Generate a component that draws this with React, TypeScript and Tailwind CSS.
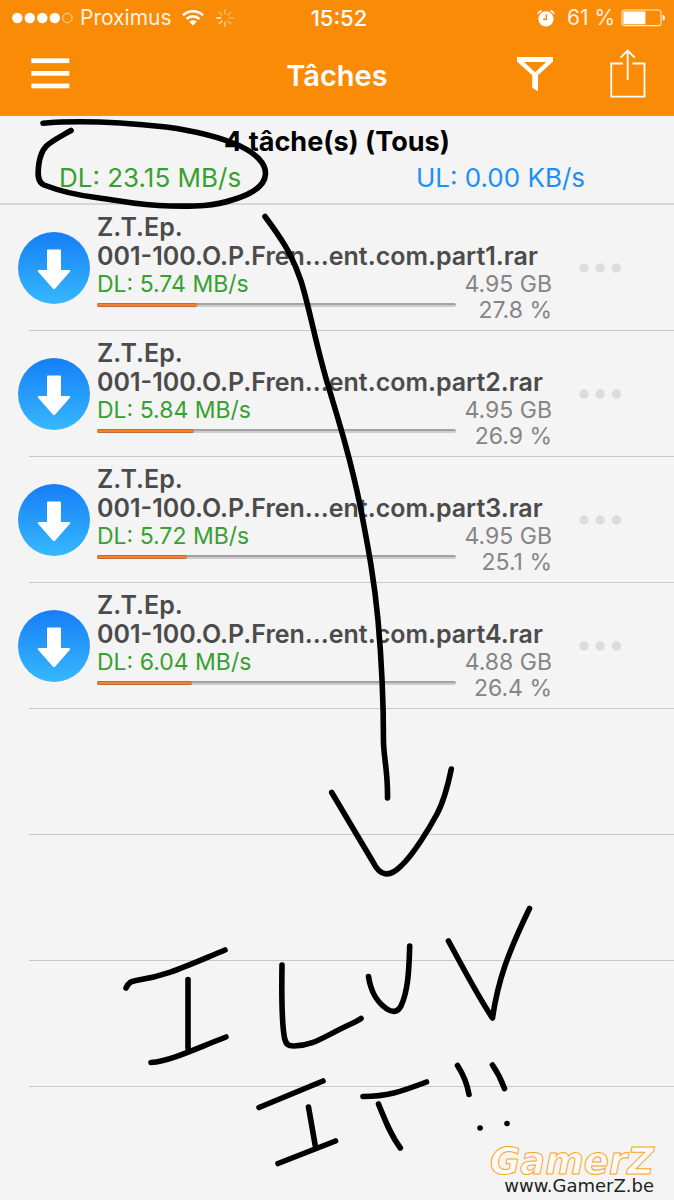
type Task = {
  id: number;
  name: string;
  speed: string;
  size: string;
  percent: number;
};

const tasks: Task[] = [
  { id: 1, name: "001-100.O.P.Fren...ent.com.part1.rar", speed: "5.74", size: "4.95 GB", percent: 27.8 },
  { id: 2, name: "001-100.O.P.Fren...ent.com.part2.rar", speed: "5.84", size: "4.95 GB", percent: 26.9 },
  { id: 3, name: "001-100.O.P.Fren...ent.com.part3.rar", speed: "5.72", size: "4.95 GB", percent: 25.1 },
  { id: 4, name: "001-100.O.P.Fren...ent.com.part4.rar", speed: "6.04", size: "4.88 GB", percent: 26.4 },
];

function SignalDots() {
  return (
    <svg width="62" height="12" viewBox="0 0 62 12" aria-hidden="true">
      <g fill="#fff">
        <circle cx="5.3" cy="6" r="5.2" />
        <circle cx="17.8" cy="6" r="5.2" />
        <circle cx="30.3" cy="6" r="5.2" />
        <circle cx="42.8" cy="6" r="5.2" />
      </g>
      <circle cx="55.4" cy="6" r="4.7" fill="none" stroke="#ffe2b8" strokeWidth="1" />
    </svg>
  );
}

function WifiIcon() {
  return (
    <svg width="22" height="16" viewBox="0 0 22 16" fill="none" stroke="#fff" strokeWidth="2.6" aria-hidden="true">
      <path d="M1 5.2C6.6-.2 15.4-.2 21 5.2" />
      <path d="M4.6 9C8.3 5.5 13.7 5.5 17.4 9" />
      <path d="M7.3 11.8C9.4 9.8 12.6 9.8 14.7 11.8L11 15.6Z" fill="#fff" stroke="none" />
    </svg>
  );
}

function Spinner() {
  const opacities = [0.45, 0.35, 0.35, 0.4, 0.55, 0.7, 0.95, 0.4];
  return (
    <svg width="18" height="18" viewBox="-9 -9 18 18" aria-hidden="true">
      {opacities.map((opacity, i) => (
        <line
          key={i}
          x1="0"
          y1="-4.2"
          x2="0"
          y2="-8.2"
          stroke="#fff"
          strokeWidth="1.5"
          strokeLinecap="round"
          opacity={opacity}
          transform={`rotate(${i * 45})`}
        />
      ))}
    </svg>
  );
}

function AlarmIcon() {
  return (
    <svg width="18" height="17" viewBox="0 0 18 17" fill="none" aria-hidden="true">
      <circle cx="9" cy="8.8" r="7.6" fill="#fff" />
      <path d="M9.3 4.3V9.3H6" stroke="#f98b07" strokeWidth="1.4" />
      <path d="M1 4.2C1.4 2.4 2.8 1.1 4.6.8M17 4.2C16.6 2.4 15.2 1.1 13.4.8" stroke="#fff" strokeWidth="1.4" />
    </svg>
  );
}

function BatteryIcon() {
  return (
    <svg width="45" height="18" viewBox="0 0 45 18" aria-hidden="true">
      <rect x="1" y="1" width="39" height="15.6" rx="2.4" fill="none" stroke="#ffe9c9" strokeWidth="1.1" />
      <rect x="2.4" y="2.4" width="22" height="12.8" rx="0.8" fill="#fff" />
      <path d="M41.6 6C43.5 6.2 43.9 7.6 43.9 8.8C43.9 10 43.5 11.4 41.6 11.6Z" fill="#fff" />
    </svg>
  );
}

function StatusBar() {
  return (
    <div className="grid grid-cols-[1fr_auto_1fr] items-center h-9 pl-3 pr-2 text-[21px] leading-6 text-white">
      <div className="flex items-center">
        <SignalDots />
        <span className="ml-1.5 text-[#fff3e0]">Proximus</span>
        <span className="ml-2.5"><WifiIcon /></span>
        <span className="ml-3"><Spinner /></span>
      </div>
      <time className="text-[22px] font-medium">15:52</time>
      <div className="flex items-center justify-end">
        <AlarmIcon />
        <span className="ml-3 text-[#fff3e0]">61 %</span>
        <span className="ml-1.5"><BatteryIcon /></span>
      </div>
    </div>
  );
}

function NavBar() {
  return (
    <nav className="grid grid-cols-[1fr_auto_1fr] items-center h-[79px] px-7 text-white">
      <button type="button" aria-label="Menu" className="justify-self-start pb-1">
        <svg width="44" height="32" viewBox="0 0 44 32" fill="#fff" aria-hidden="true">
          <rect x="3.3" y="0.4" width="38" height="4.7" />
          <rect x="3.3" y="13" width="38" height="4.7" />
          <rect x="3.3" y="25.6" width="38" height="4.7" />
        </svg>
      </button>
      <h1 className="text-[29px] leading-8 font-semibold">Tâches</h1>
      <div className="flex items-center justify-end gap-14 pb-1">
        <button type="button" aria-label="Filtrer">
          <svg width="38" height="36" viewBox="0 0 38 36" aria-hidden="true">
            <path
              fill="#fff"
              fillRule="evenodd"
              d="M1 1H37V5.4L22 19.2V35.2L16.2 31.8V19.2L1 5.4ZM8 6L19.1 16.2L30.2 6Z"
            />
          </svg>
        </button>
        <button type="button" aria-label="Partager">
          <svg width="36" height="50" viewBox="0 0 36 50" fill="none" stroke="#fff" strokeWidth="1.8" aria-hidden="true">
            <path d="M13 14.5H1.3V47.7H34.5V14.5H22.4" />
            <path d="M17.7 31V1.5M10.6 8.7L17.7 1.5L24.8 8.7" />
          </svg>
        </button>
      </div>
    </nav>
  );
}

function Summary() {
  return (
    <section className="h-[89px] pt-2.5 border-b-2 border-[#d6d6d6]">
      <h2 className="text-center text-[27px] leading-8 font-bold text-black">4 tâche(s) (Tous)</h2>
      <div className="grid grid-cols-2 pt-1 pr-9 text-[26px] leading-8">
        <p className="pl-[59px] text-[#38a031]">DL: 23.15 MB/s</p>
        <p className="text-right pr-[53px] text-[#1c90f8]">UL: 0.00 KB/s</p>
      </div>
    </section>
  );
}

function DownloadIcon() {
  return (
    <svg width="72" height="72" viewBox="0 0 72 72" className="shrink-0" aria-hidden="true">
      <defs>
        <linearGradient id="sky" x1="0" y1="0" x2="0" y2="1">
          <stop offset="0" stopColor="#167ef7" />
          <stop offset="1" stopColor="#36b8fe" />
        </linearGradient>
      </defs>
      <circle cx="36" cy="36" r="36" fill="url(#sky)" />
      <path
        d="M30 17.5H42Q43 17.5 43 18.5V38H51Q53 38.3 51.7 40L37.2 56.6Q36 57.8 34.8 56.6L20.3 40Q19 38.3 21 38H29V18.5Q29 17.5 30 17.5Z"
        fill="#fff"
      />
    </svg>
  );
}

function TaskRow({ task }: { task: Task }) {
  return (
    <li className="relative flex items-center h-[126px] pl-[18px] pr-[50px]">
      <DownloadIcon />
      <div className="flex-1 min-w-0 self-start pt-2 ml-[7px]">
        <h3 className="text-[25px] leading-[29px] font-semibold text-[#4b4b4b]">
          Z.T.Ep.
          <br />
          {task.name}
        </h3>
        <div className="flex text-[23px] leading-[26px]">
          <div className="flex-1">
            <p className="text-[#38a031]">DL: {task.speed} MB/s</p>
            <div
              role="progressbar"
              aria-label={task.name}
              aria-valuenow={task.percent}
              className="mt-1.5 h-1 rounded-full border-t-2 border-[#a2a2a2] bg-[#cccccc]"
            >
              <div
                className="-mt-0.5 h-1 rounded-full border-y border-[#c4693a] bg-[#f4812d]"
                style={{ width: `${task.percent}%` }}
              />
            </div>
          </div>
          <div className="w-24 text-right text-[#858585]">
            <p>{task.size}</p>
            <p>{task.percent} %</p>
          </div>
        </div>
      </div>
      <button type="button" aria-label="Options" className="ml-6">
        <svg width="48" height="12" viewBox="0 0 48 12" fill="#dcdcdc" aria-hidden="true">
          <circle cx="8" cy="6" r="4.7" />
          <circle cx="24.2" cy="6" r="4.7" />
          <circle cx="40.4" cy="6" r="4.7" />
        </svg>
      </button>
      <div className="absolute bottom-0 left-[29px] right-0 h-px bg-[#c9c9cb]" />
    </li>
  );
}

function Scribbles() {
  return (
    <svg
      viewBox="0 0 674 1200"
      className="pointer-events-none absolute top-0 left-0 w-full"
      fill="none"
      stroke="#000"
      strokeWidth="5.6"
      strokeLinecap="round"
      strokeLinejoin="round"
      aria-hidden="true"
    >
      <path d="M43 123.300C75 120.500 124 122.500 166 127C196 131 222 138 240 146C255 153 266 163 265.500 174C265 187 249 195 232 200C215 206 196 206.500 170 206C137 205.500 124 201 96 197.500C76 195 57 190 44 185C37 182 37.500 173 39 163C42 145 49 143 71 130.500" />
      <path d="M265 216.500C281 238 292 254 301 281C310 310 314 337 327 382C340 425 351 461 360 505C368 547 374 577 378 620C382 665 383.500 700 383.500 742C384 760 388 772 387.500 798" />
      <path d="M331.700 792.500L373 862C380 876 389 878 401 866C413 855 429 829 437 814C444 801 448 785 451.300 769" />
      <path d="M126 988C129 982 131 981.500 136 980.500C166 976 184 967 225 950" />
      <path d="M188 979.500V1048M151 1062.500C171 1061 197 1048 226 1037" />
      <path d="M282 965C281.500 996 281.500 1022 284.500 1038C286 1044.500 288 1046 294 1046C314 1046 324 1036 353 1023C357 1021 359 1020 361 1018.500" />
      <path d="M368.500 976.500C371 993 377 1002 387 1009C393 1013 398 1012 401 1006C408 991 409 971 409.700 946" />
      <path d="M448.500 941C462 966 480 1000 492.500 1018C498 980 508 953 529.500 908.500" />
      <path d="M259 1107.500L323 1081M308.500 1107L315.500 1147M278 1163.500L335.500 1141" />
      <path d="M363 1096.500C387 1096.500 400 1092 426.500 1082M378.500 1104C385 1120 390 1134 400.300 1148" />
      <path d="M457.500 1065.500C463 1074 467 1083 469 1094.500M492.500 1065C498 1073 501 1079 504.500 1088.500" />
      <path d="M480 1128H480.100M507 1123.500H507.100" />
    </svg>
  );
}

function Watermark() {
  return (
    <footer className="absolute right-5 bottom-1 flex flex-col items-end font-['DejaVu_Sans',sans-serif]">
      <span className="text-[37px] leading-7 font-bold italic text-[#fafafa] [-webkit-text-stroke:1px_#ffa51f]">GamerZ</span>
      <a href="#gamerz" className="text-[18px] leading-5 text-[#222]">www.GamerZ.be</a>
    </footer>
  );
}

export default function App() {
  return (
    <div className="relative min-h-screen bg-[#f4f4f4] font-['Inter','Liberation_Sans',sans-serif]">
      <header className="bg-[#fa8b06] border-b border-[#b6a08c]">
        <StatusBar />
        <NavBar />
      </header>
      <main>
        <Summary />
        <ul>
          {tasks.map((task) => (
            <TaskRow key={task.id} task={task} />
          ))}
        </ul>
        <div className="ml-[29px]">
          <div className="h-[126px] border-b border-[#c9c9cb]" />
          <div className="h-[126px] border-b border-[#c9c9cb]" />
          <div className="h-[126px] border-b border-[#c9c9cb]" />
        </div>
      </main>
      <Scribbles />
      <Watermark />
    </div>
  );
}
